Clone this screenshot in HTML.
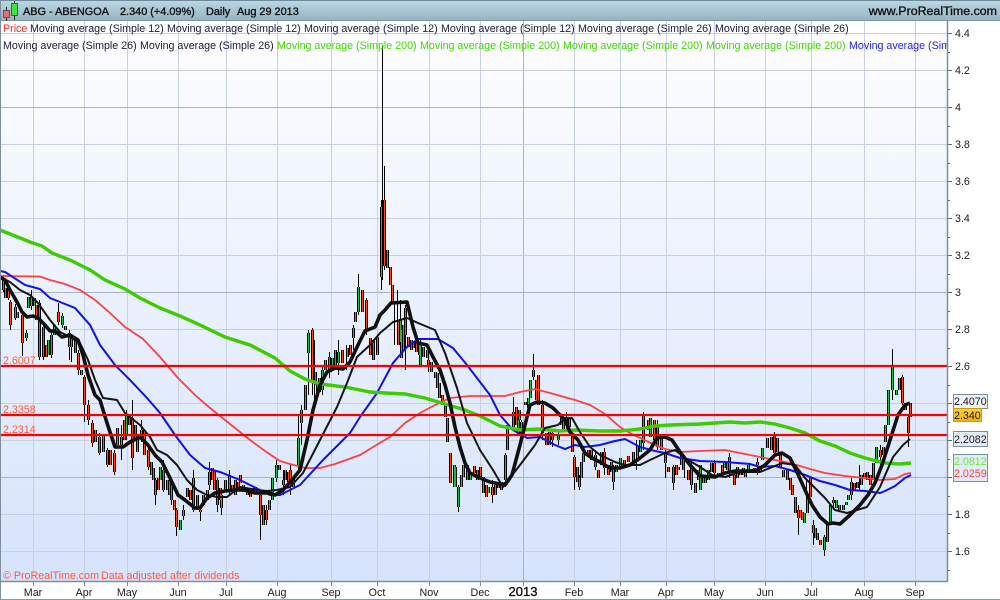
<!DOCTYPE html>
<html><head><meta charset="utf-8"><style>
html,body{margin:0;padding:0;background:#fff}
svg{display:block}
text{font-family:"Liberation Sans",Arial,sans-serif;font-size:10.7px;fill:#1c1c3c}
.b{font-size:10.9px;fill:#111;stroke:#111;stroke-width:.35px}
.g{fill:#3fd800}
.y{fill:#111;fill-opacity:.95}
.o{fill:#ff5a3a}
</style></head><body>
<svg width="1000" height="600" viewBox="0 0 1000 600" xmlns="http://www.w3.org/2000/svg">
<defs>
<linearGradient id="bg" x1="0" y1="0" x2="0" y2="1"><stop offset="0" stop-color="#fefeff"/><stop offset="1" stop-color="#d6e3fc"/></linearGradient>
<linearGradient id="hd" x1="0" y1="0" x2="0" y2="1"><stop offset="0" stop-color="#bcd8e6"/><stop offset="1" stop-color="#93b2c0"/></linearGradient>
<linearGradient id="yl" x1="0" y1="0" x2="0" y2="1"><stop offset="0" stop-color="#ffd23a"/><stop offset="1" stop-color="#f0b000"/></linearGradient>
<clipPath id="cp"><rect x="0" y="21" width="947" height="560"/></clipPath>
<path id="G" d="M15 307V318M26 333V338M28 297V308M31 297V306M34 298V306M48 340V355M51 335V355M54 325V335M62 316V325M95 430V442M103 435V452M117 428V445M121 437V445M126 415V435M137 435V452M141 430V438M160 467V480M180 520V530M183 510V516M203 495V505M207 490V500M209 472V485M221 495V508M225 480V490M229 475V490M269 500V510M272 478V500M276 465V478M298 438V465M301 410V423M305 385V410M308 333V353M322 370V390M325 360V370M329 357V370M338 352V363M353 328V338M355 312V322M358 287V312M377 337V355M381 207V277M400 320V342M401 330V358M420 345V365M454 465V487M458 487V507M461 475V487M463 465V477M470 473V480M488 487V493M505 455V480M507 425V450M513 412V427M521 422V435M528 398V408M530 380V398M533 370V377M558 435V440M566 418V425M579 478V487M581 462V478M583 453V462M613 468V482M616 465V472M620 458V467M633 452V463M637 447V457M643 415V443M650 418V437M700 465V490M703 475V483M711 463V472M724 463V468M745 473V477M757 462V465M762 448V460M767 438V448M771 437V450M804 513V523M807 497V513M824 537V550M827 523V542M830 505V523M836 500V508M846 502V505M848 495V500M851 482V495M861 475V485M873 463V480M876 447V463M883 447V455M885 425V442M888 390V425M892 365V390M896 390V395M332 358V368M319 378V392M403 325V350M495 485V495M518 420V435M563 420V430M640 440V452M681 455V465M708 470V480M727 462V470M748 465V472"/>
<path id="R" d="M3 278V290M5 288V298M8 288V298M10 302V325M17 312V318M22 315V343M39 303V357M43 327V357M46 345V357M58 312V322M65 326V330M69 333V347M71 337V347M75 340V353M78 353V370M81 370V375M84 377V405M88 405V420M92 423V443M99 437V453M107 450V465M110 450V465M114 453V472M129 415V425M132 418V458M144 430V455M148 450V467M153 468V480M155 480V495M163 470V490M167 480V490M171 485V500M174 500V510M176 510V527M190 490V500M193 478V510M197 495V510M200 510V512M214 470V490M217 480V505M235 480V495M240 475V483M243 485V492M247 488V495M252 488V493M260 495V515M263 505V525M266 510V520M279 465V470M283 480V485M285 470V480M290 470V485M293 477V487M312 330V383M317 383V393M342 350V363M347 348V357M362 290V312M366 300V330M370 338V355M373 340V360M384 200V266M390 267V285M392 285V303M405 308V335M408 337V347M413 342V348M416 340V352M423 347V357M427 350V358M428 360V367M435 372V378M437 373V388M439 383V398M445 405V417M447 418V442M450 453V483M455 467V487M467 465V480M474 466V473M480 467V477M483 477V493M492 487V495M498 485V488M503 482V485M516 407V425M525 402V405M538 375V405M542 405V433M546 433V445M552 433V440M561 418V425M569 418V427M572 433V452M574 457V477M577 467V482M588 450V457M595 455V467M598 470V478M604 452V468M608 465V475M657 425V447M665 453V463M668 467V472M673 467V483M678 467V470M691 465V485M695 483V493M705 477V483M714 463V473M718 473V477M729 457V473M734 475V485M740 470V475M750 470V473M774 435V453M780 453V467M783 470V477M787 470V480M792 485V495M795 497V513M798 510V518M800 510V518M810 478V497M813 525V533M817 533V540M820 540V545M833 500V503M839 505V510M843 505V510M854 483V490M857 482V488M864 473V478M870 475V485M880 450V457M899 378V390M902 377V403M905 403V410M908 417V433M910 403V417M36 305V320M124 420V440M135 425V440M151 462V475M158 478V490M169 480V495M187 488V497M212 468V480M220 488V500M232 485V492M238 482V490M250 490V497M255 487V493M288 472V482M315 372V385M335 350V365M350 345V355M387 250V268M398 320V345M411 340V350M419 345V355M431 362V372M442 395V405M477 470V480M486 485V497M501 483V490M519 410V420M536 380V400M549 432V445M591 450V460M601 452V465M611 462V472M624 460V468M628 456V462M648 420V430M654 420V440M661 438V450M676 465V475M683 460V470M688 470V480M698 470V480M722 465V475M737 467V478M743 468V475M754 468V473M760 466V472M777 438V452M790 478V490M802 512V520M815 528V538M867 472V480"/>
</defs>
<rect width="1000" height="600" fill="#fff"/>
<rect x="0" y="21" width="947" height="560" fill="url(#bg)"/>
<path d="M33.500 21V581M84.500 21V581M127.500 21V581M178.500 21V581M226.500 21V581M277.500 21V581M331.500 21V581M377.500 21V581M429.500 21V581M480.500 21V581M574.500 21V581M620.500 21V581M666.500 21V581M714.500 21V581M765.500 21V581M811.500 21V581M864.500 21V581M915.500 21V581" stroke="#c8d0e4" stroke-width="1" fill="none"/>
<path d="M523.500 21V581" stroke="#aab4cc" stroke-width="1"/>
<path d="M0 33.500H947M0 70.500H947M0 144.500H947M0 181.500H947M0 218.500H947M0 255.500H947M0 329.500H947M0 366.500H947M0 403.500H947M0 440.500H947M0 514.500H947M0 551.500H947" stroke="#c8d0e4" stroke-width="1"/>
<path d="M0 107.500H947M0 292.500H947M0 477.500H947" stroke="#a9b2c8" stroke-width="1"/>
<g clip-path="url(#cp)">
<g transform="translate(.5 0)" shape-rendering="crispEdges">
<path d="M382 46V280M384 166V270M3 275V292M8 286V300M10 300V330M15 304V320M22 312V356M26 330V341M31 290V310M39 300V360M43 325V360M51 330V358M58 303V325M62 313V328M69 330V360M71 335V362M78 350V375M84 375V422M88 400V425M92 420V447M99 433V455M107 448V467M114 450V475M121 425V460M126 410V440M132 400V470M141 420V442M148 448V470M155 478V505M163 460V492M171 482V505M176 508V536M183 505V520M193 470V512M200 505V521M209 462V490M217 478V512M221 492V515M229 470V495M260 490V540M266 505V525M276 460V482M283 470V495M290 465V495M298 415V470M301 405V445M308 330V395M312 328V395M322 365V395M329 352V378M338 340V375M353 325V350M358 274V315M366 298V335M381 200V290M394 303V345M397 290V335M400 300V358M405 305V370M420 340V367M428 355V372M458 485V512M492 480V503M505 453V487M513 397V428M521 420V440M533 354V380M542 400V440M552 430V447M566 412V430M574 455V490M579 475V490M595 450V470M613 465V490M643 412V450M657 420V450M665 450V478M673 465V490M691 462V490M729 453V478M774 432V455M798 505V535M813 520V545M824 535V556M833 497V510M851 478V500M892 349V400M902 375V405M908 415V447M314 340V400M346 345V370M558 430V445M604 448V475M636 440V470M684 455V478M714 460V478M757 458V475M806 480V510M859 465V490M880 445V468" stroke="#000" stroke-width="1" fill="none"/>
<use href="#G" stroke="#000" stroke-width="3" fill="none"/>
<use href="#R" stroke="#000" stroke-width="3" fill="none"/>
<use href="#G" stroke="#10c850" stroke-width="1" fill="none"/>
<use href="#R" stroke="#ff4a10" stroke-width="1" fill="none"/>
</g>
<polyline fill="none" stroke="#ff4040" stroke-width="1.800" points="0,276 40,276.500 50,280 65,284 80,290 95,300 110,313 125,327 143,339 160,357 178,378 195,395 210,408 225,420 240,432 250,440 265,451 280,461 290,464 305,468 320,468 335,464 360,455 378,444 390,437 405,423 420,413 435,405 450,398 470,396 490,396 505,396 520,392 535,389 550,393 575,400 590,405 605,414 620,427 630,433 640,438 655,445 665,449 680,452 700,451 725,450 740,453 755,456 770,459 790,463 810,469 825,473 845,476 865,478 880,480 895,479 905,474 911,473"/>
<polyline fill="none" stroke="#1010f0" stroke-width="2" points="0,271 5,272 25,285 40,289 50,298 60,302 75,308 90,325 100,345 115,365 130,380 147,398 160,413 175,435 190,455 205,468 220,472 240,480 270,495 280,495 290,490 300,485 323,460 350,433 360,417 377,393 393,363 407,347 418,339 438,339 453,348 467,365 480,382 490,395 500,415 513,430 527,438 540,437 555,445 565,449 575,445 585,447 600,445 615,441 625,439 640,447 655,451 665,453 680,458 700,461 725,462 750,464 760,467 775,466 790,470 805,475 820,481 835,485 850,490 865,491 880,493 885,491 895,486 905,478 911,475"/>
<polyline fill="none" stroke="#3fcb00" stroke-width="3.400" points="0,230 15,236 30,242 42,246 52,253 70,260 90,270 105,280 125,289 140,298 160,308 180,316 200,325 225,337 250,345 275,358 290,371 305,379 320,384 345,387 370,392 385,393 405,394 425,398 445,404 465,410 480,416 500,426 520,430 540,429 560,431 575,430 600,431 620,431 640,429 655,426 670,425 700,424 730,422 745,423 760,422 775,424 790,428 805,433 820,441 835,446 850,453 865,458 885,463 900,464 911,463"/>
<polyline fill="none" stroke="#151515" stroke-width="2" stroke-linejoin="round" points="0,277 10,282 20,290 30,295 38,303 50,320 60,332 70,337 80,343 88,360 95,380 103,398 117,400 125,413 140,425 150,437 157,450 167,455 177,465 187,480 197,490 207,495 217,497 227,497 240,487 257,490 267,491 277,490 290,487 303,473 320,440 337,407 347,383 357,357 370,345 380,333 393,322 407,318 418,323 435,330 445,353 457,388 467,423 480,450 493,470 503,487 520,465 535,445 545,428 558,425 565,418 572,418 580,432 590,447 600,455 615,462 625,465 640,465 650,460 665,453 675,450 685,458 700,467 712,475 725,477 740,472 760,472 770,468 782,463 795,465 805,478 815,488 825,498 835,510 847,513 867,507 880,487 893,457 903,445 910,439"/>
<polyline fill="none" stroke="#101010" stroke-width="3.600" stroke-linejoin="round" points="0,277 5,280 10,290 17,302 22,312 27,317 33,316 38,318 45,325 50,331 55,331 62,337 70,335 78,340 83,355 88,375 95,395 100,400 107,423 115,447 123,447 130,442 140,437 148,445 155,455 162,462 170,478 178,495 185,500 195,508 200,508 207,498 215,493 225,491 235,490 245,490 255,493 268,493 275,495 283,490 292,480 300,470 307,440 313,410 320,385 327,372 335,368 343,369 350,362 358,345 365,331 375,327 380,315 385,310 391,303 407,302 413,327 418,343 427,345 433,357 440,370 445,385 450,403 455,427 460,447 465,463 470,473 480,478 490,482 505,485 512,475 520,445 525,425 530,405 537,402 545,403 553,408 560,415 565,420 570,432 578,440 585,453 592,458 600,462 610,468 620,468 630,465 640,458 650,450 657,438 665,437 672,440 680,452 690,465 700,476 715,477 725,473 735,471 750,471 757,470 765,465 775,455 782,453 790,458 797,472 805,490 812,505 820,517 828,524 833,523 840,524 850,515 860,505 868,495 875,483 882,465 890,440 898,415 905,405 910,403"/>
<path d="M0 366H947M0 415H947M0 435H947" stroke="#fa0000" stroke-width="2.200" fill="none"/>
</g>
<text x="3" y="364" class="o">2.6007</text>
<text x="3" y="413" class="o">2.3358</text>
<text x="3" y="433" class="o">2.2314</text>
<text x="3" y="579" class="o">© ProRealTime.com</text>
<text x="101" y="579" class="o">Data adjusted after dividends</text>
<text x="3" y="32" style="fill:#ff2a2a">Price</text>
<text x="30" y="32">Moving average (Simple 12)</text>
<text x="167" y="32">Moving average (Simple 12)</text>
<text x="304" y="32">Moving average (Simple 12)</text>
<text x="441" y="32">Moving average (Simple 12)</text>
<text x="578" y="32">Moving average (Simple 26)</text>
<text x="715" y="32">Moving average (Simple 26)</text>
<text x="3" y="49">Moving average (Simple 26)</text>
<text x="140" y="49">Moving average (Simple 26)</text>
<text x="277" y="49" class="g">Moving average (Simple 200)</text>
<text x="420" y="49" class="g">Moving average (Simple 200)</text>
<text x="563" y="49" class="g">Moving average (Simple 200)</text>
<text x="706" y="49" class="g">Moving average (Simple 200)</text>
<g clip-path="url(#cp)"><text x="849" y="49" style="fill:#2222ff">Moving average (Simple 200)</text></g>
<rect x="0" y="0" width="1000" height="21" fill="url(#hd)"/>
<rect x="0" y="0" width="1000" height="1" fill="#6f8a98"/>
<rect x="0" y="20" width="1000" height="1" fill="#7e98a6"/>
<path d="M6.500 7V21M14.500 1V20" stroke="#222" stroke-width="1"/>
<rect x="3.500" y="10.500" width="6" height="7" fill="#f06a6a" stroke="#555"/>
<rect x="11.500" y="3.500" width="6" height="12" fill="#44e044" stroke="#555"/>
<text x="23" y="15" class="b">ABG - ABENGOA</text>
<text x="120" y="15" class="b">2.340 (+4.09%)</text>
<text x="206" y="15" class="b">Daily</text>
<text x="237" y="15" class="b">Aug 29 2013</text>
<text x="997" y="15" class="b" text-anchor="end" style="font-size:12.400px">www.ProRealTime.com</text>
<path d="M947.500 21V581" stroke="#7b8fa0" stroke-width="1.500"/>
<path d="M0 581.500H948" stroke="#7b8fa0" stroke-width="1.500"/>
<path d="M0 599.500H1000" stroke="#8a9aa6" stroke-width="1"/>
<path d="M0.500 0V600" stroke="#7b8fa0" stroke-width="1"/>
<path d="M948 33.500h4M948 70.500h4M948 107.500h4M948 144.500h4M948 181.500h4M948 218.500h4M948 255.500h4M948 292.500h4M948 329.500h4M948 366.500h4M948 403.500h4M948 440.500h4M948 477.500h4M948 514.500h4M948 551.500h4M948 52.500h2M948 89.500h2M948 126.500h2M948 163.500h2M948 200.500h2M948 237.500h2M948 274.500h2M948 311.500h2M948 348.500h2M948 385.500h2M948 422.500h2M948 459.500h2M948 496.500h2M948 533.500h2M948 570.500h2" stroke="#667" stroke-width="1" fill="none"/>
<path d="M33.500 582v4M84.500 582v4M127.500 582v4M178.500 582v4M226.500 582v4M277.500 582v4M331.500 582v4M377.500 582v4M429.500 582v4M480.500 582v4M523.500 582v4M574.500 582v4M620.500 582v4M666.500 582v4M714.500 582v4M765.500 582v4M811.500 582v4M864.500 582v4M915.500 582v4" stroke="#7b8fa0" stroke-width="1" fill="none"/>
<text x="955" y="37" class="y">4.4</text>
<text x="955" y="74" class="y">4.2</text>
<text x="955" y="111" class="y">4</text>
<text x="955" y="148" class="y">3.8</text>
<text x="955" y="185" class="y">3.6</text>
<text x="955" y="222" class="y">3.4</text>
<text x="955" y="259" class="y">3.2</text>
<text x="955" y="296" class="y">3</text>
<text x="955" y="333" class="y">2.8</text>
<text x="955" y="370" class="y">2.6</text>
<text x="955" y="518" class="y">1.8</text>
<text x="955" y="555" class="y">1.6</text>
<rect x="953.500" y="394.500" width="34" height="14" fill="#f0f3fa" stroke="#7b8fa0"/>
<text x="954" y="405" class="y">2.4070</text>
<rect x="953.500" y="408.500" width="28" height="13" fill="url(#yl)" stroke="#c89a10"/>
<text x="954" y="419" class="y">2.340</text>
<rect x="953.500" y="431.500" width="34" height="15" fill="#e6ecf8" stroke="#7b8fa0"/>
<text x="954" y="443" class="y">2.2082</text>
<rect x="953.500" y="454.500" width="34" height="27" fill="#e4ebf8" stroke="#7b8fa0"/>
<text x="954" y="465" style="fill:#66ee33">2.0812</text>
<text x="954" y="477" style="fill:#ff4444">2.0259</text>
<text x="33" y="596" text-anchor="middle" class="y">Mar</text>
<text x="84" y="596" text-anchor="middle" class="y">Apr</text>
<text x="127" y="596" text-anchor="middle" class="y">May</text>
<text x="178" y="596" text-anchor="middle" class="y">Jun</text>
<text x="226" y="596" text-anchor="middle" class="y">Jul</text>
<text x="277" y="596" text-anchor="middle" class="y">Aug</text>
<text x="331" y="596" text-anchor="middle" class="y">Sep</text>
<text x="377" y="596" text-anchor="middle" class="y">Oct</text>
<text x="429" y="596" text-anchor="middle" class="y">Nov</text>
<text x="480" y="596" text-anchor="middle" class="y">Dec</text>
<text x="523" y="596" text-anchor="middle" class="b" style="font-size:13px">2013</text>
<text x="574" y="596" text-anchor="middle" class="y">Feb</text>
<text x="620" y="596" text-anchor="middle" class="y">Mar</text>
<text x="666" y="596" text-anchor="middle" class="y">Apr</text>
<text x="714" y="596" text-anchor="middle" class="y">May</text>
<text x="765" y="596" text-anchor="middle" class="y">Jun</text>
<text x="811" y="596" text-anchor="middle" class="y">Jul</text>
<text x="864" y="596" text-anchor="middle" class="y">Aug</text>
<text x="915" y="596" text-anchor="middle" class="y">Sep</text>
</svg>
</body></html>
